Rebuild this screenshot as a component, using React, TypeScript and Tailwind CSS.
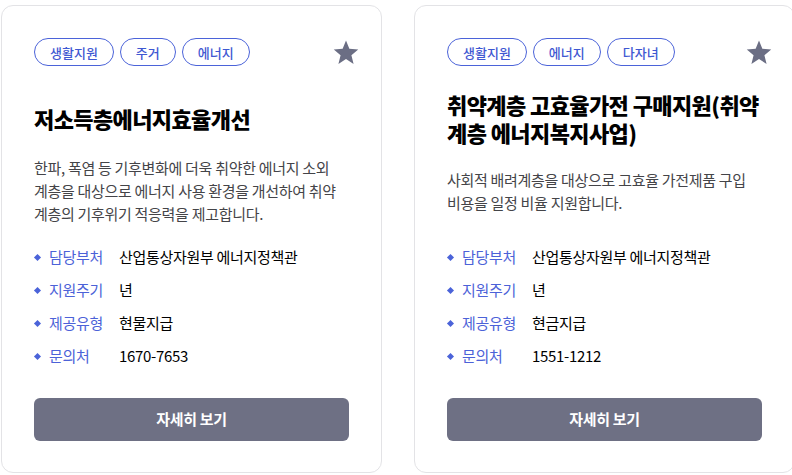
import React from "react";

type Card = {
  tags: string[];
  title: string;
  desc: string;
  info: [string, string][];
};

const cards: Card[] = [
  {
    tags: ["생활지원", "주거", "에너지"],
    title: "저소득층에너지효율개선",
    desc: "한파, 폭염 등 기후변화에 더욱 취약한 에너지 소외 계층을 대상으로 에너지 사용 환경을 개선하여 취약 계층의 기후위기 적응력을 제고합니다.",
    info: [
      ["담당부처", "산업통상자원부 에너지정책관"],
      ["지원주기", "년"],
      ["제공유형", "현물지급"],
      ["문의처", "1670-7653"],
    ],
  },
  {
    tags: ["생활지원", "에너지", "다자녀"],
    title: "취약계층 고효율가전 구매지원(취약계층 에너지복지사업)",
    desc: "사회적 배려계층을 대상으로 고효율 가전제품 구입 비용을 일정 비율 지원합니다.",
    info: [
      ["담당부처", "산업통상자원부 에너지정책관"],
      ["지원주기", "년"],
      ["제공유형", "현금지급"],
      ["문의처", "1551-1212"],
    ],
  },
];

function Star() {
  return (
    <svg width="26" height="25" viewBox="0 0 24 23" className="shrink-0">
      <path
        d="M12 0.5l3.1 7.6 8.2 0.6-6.3 5.3 2 8-7-4.4-7 4.4 2-8L0.7 8.7l8.2-0.6z"
        fill="#6b6e84"
      />
    </svg>
  );
}

function CardView({ c }: { c: Card }) {
  return (
    <div className="w-[381px] h-[468px] shrink-0 rounded-[12px] border border-[#e3e3e6] bg-white px-[32px] pt-[32px] pb-[31px] flex flex-col">
      <div className="flex items-center justify-between h-[28px]">
        <div className="flex gap-[6px]">
          {c.tags.map((t) => (
            <span
              key={t}
              className="h-[28px] px-[15px] rounded-full border border-[#4b63d9] text-[#3f58d2] text-[13px] font-medium flex items-center leading-none"
            >
              {t}
            </span>
          ))}
        </div>
        <div className="-mr-[10px]">
          <Star />
        </div>
      </div>
      <div className="mt-[24px] h-[56px] flex items-center -mr-[6px]">
        <h2 className="text-[22px] leading-[28px] font-extrabold text-black tracking-[-0.6px]">
          {c.title}
        </h2>
      </div>
      <div className="mt-[10px] h-[69px] flex items-center">
        <p className="text-[15px] leading-[23px] text-[#444448] tracking-[-0.3px] break-keep">
          {c.desc}
        </p>
      </div>
      <ul className="mt-[21px] flex flex-col gap-[11px]">
        {c.info.map(([k, v]) => (
          <li key={k} className="flex items-center h-[22px] text-[15px] tracking-[-0.3px]">
            <span className="w-[5px] h-[5px] bg-[#4b63d9] rotate-45 ml-[1px] mr-[9px] shrink-0" />
            <span className="w-[70px] text-[#4c62d8] shrink-0">{k}</span>
            <span className="text-black">{v}</span>
          </li>
        ))}
      </ul>
      <button className="mt-auto h-[43px] w-full rounded-[6px] bg-[#6e7084] text-white text-[15px] font-bold tracking-[-0.3px]">
        자세히 보기
      </button>
    </div>
  );
}

export default function App() {
  return (
    <div
      className="w-[792px] h-[475px] overflow-hidden bg-white pt-[5px] pl-[1px] flex gap-[32px]"
      style={{ fontFamily: '"Noto Sans CJK KR", "Noto Sans", sans-serif' }}
    >
      {cards.map((c, i) => (
        <CardView key={i} c={c} />
      ))}
    </div>
  );
}
